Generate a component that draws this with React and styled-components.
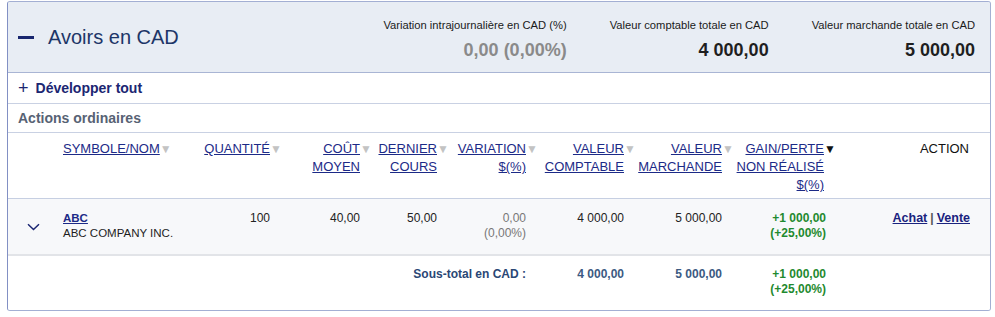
import React from 'react'
import styled, { createGlobalStyle } from 'styled-components'

const Global = createGlobalStyle`
  body {
    margin: 0;
    background: #ffffff;
    font-family: "Liberation Sans", Arial, Helvetica, sans-serif;
    color: #222;
  }
`

const Panel = styled.section`
  margin: 1px 4px 0 7px;
  border: 1px solid #a3afd3;
  border-left-color: #8290c4;
  border-radius: 3px;
  overflow: hidden;
`

const Header = styled.div`
  height: 70px;
  background: #e8edf4;
  display: flex;
  align-items: flex-start;
  justify-content: space-between;
  border-bottom: 1px solid #a9b5d4;
  padding-right: 15px;
`

const TitleBox = styled.div`
  display: flex;
  align-items: center;
  gap: 14px;
  height: 100%;
  padding-left: 10px;
`

const Minus = styled.span`
  display: block;
  width: 16px;
  height: 3px;
  background: #18266e;
`

const Title = styled.h2`
  margin: 0;
  font-size: 20px;
  font-weight: normal;
  color: #1d3668;
`

const Stats = styled.div`
  display: flex;
  gap: 43px;
  padding-top: 16px;
`

const Stat = styled.div`
  text-align: right;
`

const StatLabel = styled.div`
  font-size: 11.2px;
  line-height: 14px;
  color: #1a1a1a;
`

const StatValue = styled.div`
  margin-top: 7px;
  font-size: 18px;
  line-height: 22px;
  font-weight: bold;
  color: ${p => (p.$muted ? '#8a8a8a' : '#1f1f1f')};
`

const Bar = styled.div`
  display: flex;
  align-items: center;
  gap: 7px;
  height: ${p => (p.$short ? '28px' : '30px')};
  padding-left: 10px;
  border-bottom: 1px solid #c9d1e3;
  font-size: 14px;
  font-weight: bold;
  color: ${p => (p.$muted ? '#576274' : '#1b2672')};
`

const Plus = styled.span`
  font-size: 18px;
  font-weight: normal;
  line-height: 1;
  color: #1b2672;
  margin-top: -1px;
`

const Table = styled.table`
  width: 100%;
  border-collapse: collapse;
  table-layout: fixed;
`

const Th = styled.th`
  text-align: ${p => p.$align || 'right'};
  vertical-align: top;
  font-weight: normal;
  font-size: 13px;
  line-height: 18px;
  padding: 7px ${p => p.$pr || 12}px 4px ${p => p.$pl || 2}px;
  color: #111;
`

const SortLink = styled.a`
  color: #1c2a87;
  text-decoration: underline;
  cursor: pointer;
`

const Arrow = styled.span`
  display: inline-block;
  width: 11px;
  margin-right: -11px;
  font-size: 12px;
  text-align: center;
  color: ${p => (p.$active ? '#111' : '#c3c3c3')};
`

const Row = styled.tr`
  background: ${p => (p.$shade ? '#f7f8fa' : '#fff')};
  border-top: ${p => (p.$shade ? '1px solid #c6cfe2' : 'none')};
  border-bottom: ${p => (p.$shade ? '2px solid #e2e4e8' : 'none')};
`

const Td = styled.td`
  text-align: ${p => p.$align || 'right'};
  vertical-align: ${p => p.$valign || 'top'};
  font-size: 12px;
  line-height: 15px;
  padding: ${p => p.$pt || 12}px ${p => p.$pr ?? 12}px ${p => p.$pb || 13}px ${p => p.$pl || 2}px;
  color: ${p => p.$color || '#222'};
  font-weight: ${p => (p.$bold ? 'bold' : 'normal')};
`

const Symbol = styled.a`
  display: block;
  font-size: 11.5px;
  font-weight: bold;
  color: #1c2a87;
  text-decoration: underline;
`

const Company = styled.div`
  font-size: 11.5px;
  color: #1e1e1e;
`

const ActionLink = styled.a`
  font-size: 12.5px;
  font-weight: bold;
  color: #1a237e;
  text-decoration: underline;
`

const Sep = styled.span`
  color: #555;
  font-weight: bold;
  margin: 0 3px;
`

const Chevron = () => (
  <svg width="13" height="8" viewBox="0 0 13 8" style={{ display: 'block', marginLeft: 17 }}>
    <path d="M1 1.2 L6.5 6.5 L12 1.2" fill="none" stroke="#1b2672" strokeWidth="1.5" />
  </svg>
)

const columns = [
  { key: 'qty', lines: ['QUANTITÉ'] },
  { key: 'cost', lines: ['COÛT', 'MOYEN'] },
  { key: 'last', lines: ['DERNIER', 'COURS'] },
  { key: 'var', lines: ['VARIATION', '$(%)'] },
  { key: 'book', lines: ['VALEUR', 'COMPTABLE'] },
  { key: 'market', lines: ['VALEUR', 'MARCHANDE'] },
  { key: 'gain', lines: ['GAIN/PERTE', 'NON RÉALISÉ', '$(%)'], active: true },
]

function HeadLabel({ lines, active }) {
  return lines.map((line, i) => (
    <React.Fragment key={i}>
      {i > 0 && <br />}
      <SortLink>{line}</SortLink>
      {i === 0 && <Arrow $active={active}>▼</Arrow>}
    </React.Fragment>
  ))
}

const GREEN = '#1f8a2f'
const SLATE = '#3c5a82'

export default function App() {
  return (
    <>
      <Global />
      <Panel>
        <Header>
          <TitleBox>
            <Minus />
            <Title>Avoirs en CAD</Title>
          </TitleBox>
          <Stats>
            <Stat>
              <StatLabel>Variation intrajournalière en CAD (%)</StatLabel>
              <StatValue $muted>0,00 (0,00%)</StatValue>
            </Stat>
            <Stat>
              <StatLabel>Valeur comptable totale en CAD</StatLabel>
              <StatValue>4 000,00</StatValue>
            </Stat>
            <Stat>
              <StatLabel>Valeur marchande totale en CAD</StatLabel>
              <StatValue>5 000,00</StatValue>
            </Stat>
          </Stats>
        </Header>

        <Bar>
          <Plus>+</Plus>
          Développer tout
        </Bar>
        <Bar $muted $short>Actions ordinaires</Bar>

        <Table>
          <colgroup>
            <col style={{ width: 50 }} />
            <col style={{ width: 142 }} />
            <col style={{ width: 82 }} />
            <col style={{ width: 90 }} />
            <col style={{ width: 77 }} />
            <col style={{ width: 89 }} />
            <col style={{ width: 98 }} />
            <col style={{ width: 98 }} />
            <col style={{ width: 102 }} />
            <col />
          </colgroup>
          <thead>
            <tr>
              <Th />
              <Th $align="left" $pl={5}>
                <HeadLabel lines={['SYMBOLE/NOM']} />
              </Th>
              {columns.map(c => (
                <Th key={c.key}>
                  <HeadLabel lines={c.lines} active={c.active} />
                </Th>
              ))}
              <Th $pr={21}>ACTION</Th>
            </tr>
          </thead>
          <tbody>
            <Row $shade>
              <Td $align="left" $valign="middle" $pl={0} $pr={0} $pt={10} $pb={10}>
                <Chevron />
              </Td>
              <Td $align="left" $pl={5}>
                <Symbol>ABC</Symbol>
                <Company>ABC COMPANY INC.</Company>
              </Td>
              <Td>100</Td>
              <Td>40,00</Td>
              <Td>50,00</Td>
              <Td $color="#777">0,00<br />(0,00%)</Td>
              <Td>4 000,00</Td>
              <Td>5 000,00</Td>
              <Td $color={GREEN} $bold $pr={10}>+1 000,00<br />(+25,00%)</Td>
              <Td $pr={20}>
                <ActionLink>Achat</ActionLink>
                <Sep>|</Sep>
                <ActionLink>Vente</ActionLink>
              </Td>
            </Row>
            <Row>
              <Td />
              <Td colSpan={5} $bold $color="#2a4775" $pt={11}>Sous-total en CAD :</Td>
              <Td $bold $color={SLATE} $pt={11}>4 000,00</Td>
              <Td $bold $color={SLATE} $pt={11}>5 000,00</Td>
              <Td $bold $color={GREEN} $pr={10} $pt={11}>+1 000,00<br />(+25,00%)</Td>
              <Td />
            </Row>
          </tbody>
        </Table>
      </Panel>
    </>
  )
}
